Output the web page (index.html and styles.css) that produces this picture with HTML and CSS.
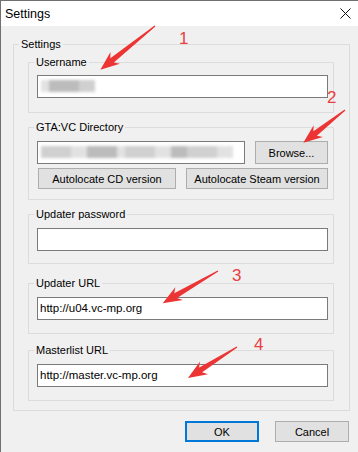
FILE: index.html
```html
<!DOCTYPE html>
<html lang="en">
<head>
    <meta charset="UTF-8">
    <meta name="viewport" content="width=device-width, initial-scale=1.0">
    <title>Settings</title>
    <link rel="stylesheet" href="styles.css">
</head>
<body>
    <div class="window">
        <div class="titlebar">
            <span class="title">Settings</span>
            <svg class="close" width="11" height="11" viewBox="0 0 11 11">
                <path d="M0.5 0.5 L10.5 10.5 M10.5 0.5 L0.5 10.5" stroke="#111" stroke-width="1" fill="none"/>
            </svg>
        </div>

        <div class="content">
            <fieldset class="group outer">
                <legend>Settings</legend>
                <div class="outer-body">
                    <fieldset class="group">
                        <legend>Username</legend>
                        <div class="group-body">
                            <div class="field">
                                <div class="smudge">
                                    <span class="blob light w8"></span>
                                    <span class="blob mid w30"></span>
                                    <span class="blob soft w16"></span>
                                </div>
                            </div>
                        </div>
                    </fieldset>

                    <fieldset class="group gta">
                        <legend>GTA:VC Directory</legend>
                        <div class="group-body tight">
                            <div class="row">
                                <div class="field grow">
                                    <div class="smudge">
                                        <span class="blob soft w30"></span>
                                        <span class="blob light w16"></span>
                                        <span class="blob mid w30"></span>
                                        <span class="blob light w8"></span>
                                        <span class="blob soft w30"></span>
                                        <span class="blob light w16"></span>
                                        <span class="blob mid w16"></span>
                                        <span class="blob soft w30"></span>
                                        <span class="blob light w16"></span>
                                    </div>
                                </div>
                                <button class="btn browse">Browse...</button>
                            </div>
                            <div class="row">
                                <button class="btn cd">Autolocate CD version</button>
                                <button class="btn steam">Autolocate Steam version</button>
                            </div>
                        </div>
                    </fieldset>

                    <fieldset class="group password">
                        <legend>Updater password</legend>
                        <div class="group-body">
                            <input class="field" type="password">
                        </div>
                    </fieldset>

                    <fieldset class="group updater">
                        <legend>Updater URL</legend>
                        <div class="group-body">
                            <input class="field" type="text" value="http://u04.vc-mp.org">
                        </div>
                    </fieldset>

                    <fieldset class="group masterlist">
                        <legend>Masterlist URL</legend>
                        <div class="group-body">
                            <input class="field" type="text" value="http://master.vc-mp.org">
                        </div>
                    </fieldset>
                </div>
            </fieldset>

            <div class="actions">
                <button class="btn dialog default">OK</button>
                <button class="btn dialog">Cancel</button>
            </div>
        </div>

        <!-- red markup drawn over the screenshot -->
        <svg class="marks" width="358" height="452" viewBox="0 0 358 452">
            <g fill="#ec3434">
                <polygon transform="translate(155 26) rotate(141.3)" points="0,-0.6 55,-2.8 51,-7.5 70,0 51,7.5 55,2.8 0,0.6"/>
                <polygon transform="translate(345 110) rotate(141.8)" points="0,-0.6 38,-2.8 34,-7.5 53,0 34,7.5 38,2.8 0,0.6"/>
                <polygon transform="translate(218 271) rotate(149.8)" points="0,-0.6 49,-2.8 45,-7.5 64,0 45,7.5 49,2.8 0,0.6"/>
                <polygon transform="translate(237 347) rotate(147.7)" points="0,-0.6 43,-2.8 39,-7.5 58,0 39,7.5 43,2.8 0,0.6"/>
            </g>
            <g class="mark-num">
                <text x="179" y="44">1</text>
                <text x="327" y="103">2</text>
                <text x="232" y="281">3</text>
                <text x="254" y="350">4</text>
            </g>
        </svg>
    </div>
</body>
</html>
```

FILE: styles.css
```css
body {
    margin: 0;
    background: #f0f0f0;
    font-family: 'Liberation Sans', Arial, sans-serif;
    font-size: 11px;
    color: #000;
}

.window {
    position: relative;
    width: 358px;
    height: 452px;
    box-sizing: border-box;
    border-top: 1px solid #707070;
    border-left: 1px solid #707070;
    background: #f0f0f0;
    overflow: hidden;
}

.titlebar {
    height: 25px;
    background: #fff;
    display: flex;
    align-items: center;
    justify-content: space-between;
    padding: 0 7px 0 4px;
}

.title {
    font-size: 12.5px;
}

.close {
    display: block;
}

.content {
    padding: 10px 8px 0 12px;
}

/* group boxes */
.group {
    margin: 0;
    padding: 0;
    border: 1px solid #dcdcdc;
    min-width: 0;
}

.group legend {
    padding: 0 2px;
    margin-left: 6px;
    line-height: 16px;
}

.outer legend {
    margin-left: 5px;
}

.outer-body {
    padding: 2px 15px 9px 14px;
}

.gta,
.password {
    margin-top: 6px;
}

.updater {
    margin-top: 11px;
}

.masterlist {
    margin-top: 8px;
}

.group-body {
    padding: 5px 5px 14px 8px;
}

.gta .group-body {
    padding: 6px 5px 10px 8px;
}

.password .group-body {
    padding: 6px 5px 12px 8px;
}

.updater .group-body,
.masterlist .group-body {
    padding: 6px 5px 13px 8px;
}

/* text boxes */
.field {
    display: block;
    box-sizing: border-box;
    width: 100%;
    height: 23px;
    margin: 0;
    border: 1px solid #7a7a7a;
    background: #fff;
    padding: 0 2px 2px;
    font-family: inherit;
    font-size: 11.5px;
    color: #000;
    outline: none;
}

.field.grow {
    flex: 1;
    width: auto;
}

.smudge {
    display: flex;
    align-items: center;
    height: 100%;
    padding-left: 1px;
    filter: blur(1.6px);
}

.blob {
    height: 12px;
}

.blob.light { background: #e2e2e2; }
.blob.soft { background: #d0d0d0; }
.blob.mid { background: #bcbcbc; }

.w8 { width: 8px; }
.w16 { width: 16px; }
.w30 { width: 30px; }

.row {
    display: flex;
    gap: 10px;
}

.row + .row {
    margin-top: 4px;
}

/* buttons */
.btn {
    box-sizing: border-box;
    height: 21px;
    margin: 0;
    padding: 0;
    border: 1px solid #adadad;
    background: #e1e1e1;
    font-family: inherit;
    font-size: 11px;
    color: #000;
}

.browse {
    width: 73px;
    height: 23px;
}

.cd {
    width: 139px;
    margin-left: 1px;
}

.steam {
    width: 142px;
    flex-shrink: 0;
}

.actions {
    display: flex;
    justify-content: flex-end;
    gap: 16px;
    margin-top: 10px;
    padding-right: 1px;
}

.dialog {
    width: 74px;
}

.default {
    border: 2px solid #0078d7;
}

/* annotation overlay */
.marks {
    position: absolute;
    top: -1px;
    left: -1px;
    pointer-events: none;
}

.mark-num {
    fill: #e84040;
    font-family: 'Liberation Sans', Arial, sans-serif;
    font-size: 17px;
}
```
